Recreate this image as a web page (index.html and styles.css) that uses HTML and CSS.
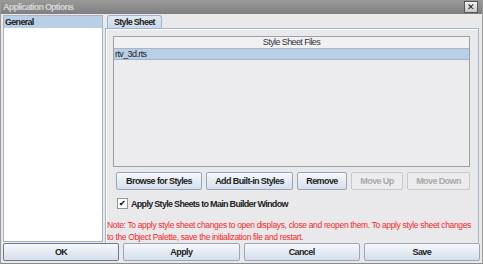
FILE: index.html
```html
<!DOCTYPE html>
<html>

<head>
    <meta charset="UTF-8">
    <title>Application Options</title>
    <link rel="stylesheet" href="styles.css">
</head>

<body>
    <div class="window">
        <div class="titlebar">
            <span class="title">Application Options</span>
            <span class="close">&#x2715;</span>
        </div>

        <div class="main">
            <div class="side-list">
                <div class="side-item selected">General</div>
            </div>

            <div class="tabs">
                <div class="tab-strip">
                    <div class="tab active">Style Sheet</div>
                </div>
                <div class="tab-panel">
                    <div class="table">
                        <div class="table-head">Style Sheet Files</div>
                        <div class="table-row selected">rtv_3d.rts</div>
                    </div>

                    <div class="button-row">
                        <button class="btn browse">Browse for Styles</button>
                        <button class="btn builtin">Add Built-in Styles</button>
                        <button class="btn remove">Remove</button>
                        <button class="btn move-up" disabled>Move Up</button>
                        <button class="btn move-down" disabled>Move Down</button>
                    </div>

                    <label class="check">
                        <span class="box">&#x2714;</span>
                        Apply Style Sheets to Main Builder Window
                    </label>

                    <p class="note">Note: To apply style sheet changes to open displays, close and reopen them. To apply style sheet changes to the Object Palette, save the initialization file and restart.</p>
                </div>
            </div>
        </div>

        <div class="footer">
            <button class="btn big focused">OK</button>
            <button class="btn big">Apply</button>
            <button class="btn big">Cancel</button>
            <button class="btn big">Save</button>
        </div>
    </div>
</body>

</html>
```

FILE: styles.css
```css
body {
    margin: 0;
    padding: 0;
    font-family: 'Liberation Sans', Arial, sans-serif;
    font-size: 9px;
    letter-spacing: -0.6px;
    color: #222;
    background: #e9e9ec;
}

.window {
    width: 483px;
    height: 264px;
    box-sizing: border-box;
    display: flex;
    flex-direction: column;
    background: #e9e9ec;
    border-left: 1px solid #9a9a9a;
    border-right: 1px solid #9a9a9a;
    border-bottom: 1px solid #8a8a8a;
}

.titlebar {
    height: 14px;
    display: flex;
    align-items: center;
    justify-content: space-between;
    padding: 0 4px 0 2px;
    background: linear-gradient(#9a9a9a, #7f7f7f);
}

.title {
    color: #d6d6d6;
    font-weight: bold;
    letter-spacing: -0.8px;
}

.close {
    width: 12px;
    height: 10px;
    line-height: 10px;
    font-size: 9px;
    letter-spacing: 0;
    text-align: center;
    color: #111;
    background: linear-gradient(#f2f2f2, #c8c8c8);
    border: 1px solid #555;
}

.main {
    flex: 1;
    display: flex;
    padding: 1px 3px 0 2px;
    gap: 2px;
    min-height: 0;
}

.side-list {
    width: 98px;
    background: #fff;
    border: 1px solid #a8b4c4;
    margin-bottom: 1px;
}

.side-item {
    height: 12px;
    line-height: 12px;
    padding-left: 1px;
    font-weight: bold;
    letter-spacing: -0.7px;
}

.side-item.selected {
    background: #b8cfe6;
}

.tabs {
    flex: 1;
    display: flex;
    flex-direction: column;
}

.tab-strip {
    display: flex;
    padding-left: 2px;
    height: 13px;
}

.tab {
    padding: 0 6px;
    line-height: 13px;
    font-weight: bold;
    letter-spacing: -0.7px;
    border: 1px solid #a3b3c8;
    border-bottom: none;
    border-radius: 3px 3px 0 0;
    background: linear-gradient(#e0e9f3, #c9d8e8);
}

.tab-panel {
    flex: 1;
    border: 1px solid #a3b3c8;
    border-bottom: none;
    box-shadow: inset 1px 1px 0 #fff;
    padding: 7px 8px 0 7px;
    display: flex;
    flex-direction: column;
}

.table {
    height: 129px;
    background: #ececef;
    border: 1px solid #9aa0aa;
}

.table-head {
    height: 11px;
    line-height: 11px;
    text-align: center;
    color: #333;
    border-bottom: 1px solid #aab4c2;
    background: #f1f1f4;
}

.table-row {
    height: 10px;
    line-height: 10px;
    padding-left: 1px;
}

.table-row.selected {
    background: #b8cfe6;
    border-bottom: 1px solid #a0b4cc;
}

.button-row {
    display: flex;
    gap: 4px;
    margin: 5px 0 0 3px;
}

.btn {
    font-family: inherit;
    font-size: 9px;
    font-weight: bold;
    letter-spacing: -0.6px;
    color: #222;
    height: 18px;
    padding: 0;
    white-space: nowrap;
    border: 1px solid #9aa6b6;
    border-radius: 2px;
    background: linear-gradient(#f6f8fb, #d4dfec);
}

.browse { width: 86px; }
.builtin { width: 87px; }
.remove { width: 50px; }
.move-up { width: 52px; }
.move-down { width: 63px; }

.btn:disabled {
    color: #a8a8a8;
    background: #ececef;
    border-color: #c8c8cc;
}

.check {
    display: flex;
    align-items: center;
    gap: 3px;
    margin: 8px 0 0 4px;
    font-weight: bold;
    letter-spacing: -0.7px;
}

.box {
    width: 9px;
    height: 9px;
    line-height: 9px;
    font-size: 8px;
    letter-spacing: 0;
    text-align: center;
    background: #fff;
    border: 1px solid #8c96a4;
}

.note {
    margin: auto -6px 0 -6px;
    color: #f02828;
    font-size: 8.5px;
    line-height: 12px;
    letter-spacing: -0.35px;
}

.footer {
    display: flex;
    gap: 4px;
    padding: 0 2px 2px 2px;
}

.btn.big {
    flex: 1;
    height: 18px;
}

.btn.focused {
    border-color: #6f7c8e;
}
```
